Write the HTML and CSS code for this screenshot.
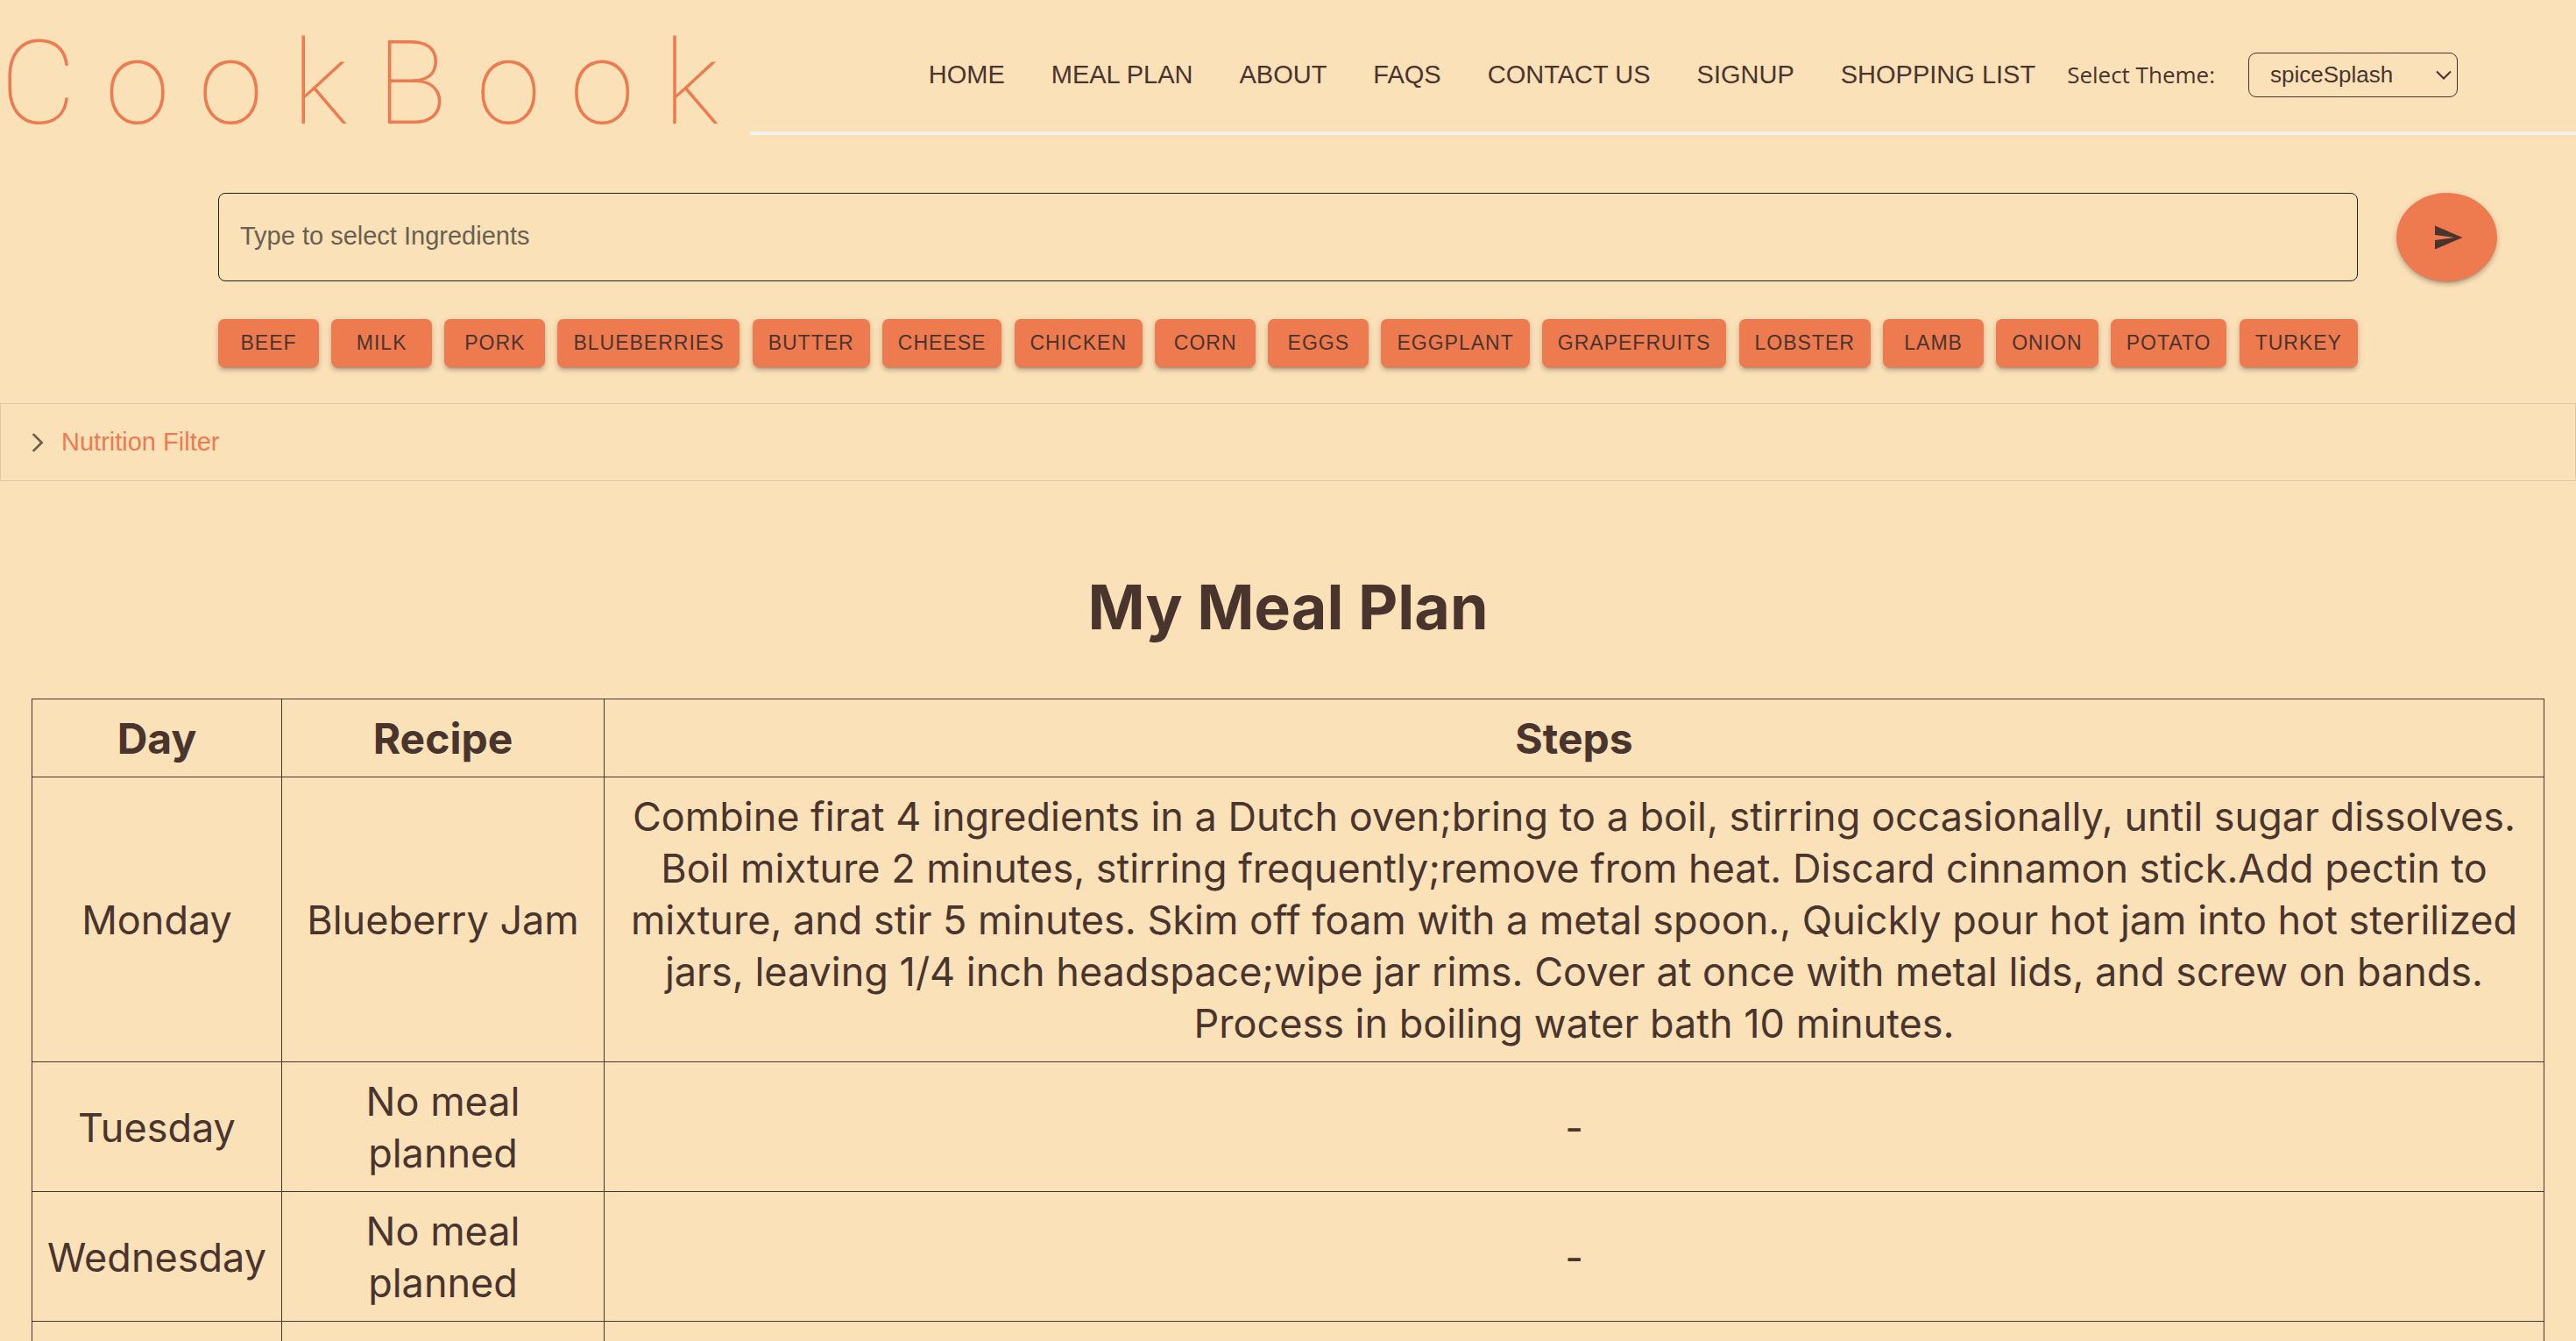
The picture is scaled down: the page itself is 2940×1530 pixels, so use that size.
FILE: index.html
```html
<!DOCTYPE html>
<html lang="en">
<head>
<meta charset="utf-8">
<title>CookBook</title>
<link rel="stylesheet" href="styles.css">
</head>
<body>
<header class="header">
  <div class="logo">CookBook</div>
  <div class="topbar">
    <nav class="nav">
      <a href="#">HOME</a>
      <a href="#">MEAL PLAN</a>
      <a href="#">ABOUT</a>
      <a href="#">FAQS</a>
      <a href="#">CONTACT US</a>
      <a href="#">SIGNUP</a>
      <a href="#">SHOPPING LIST</a>
    </nav>
    <label class="theme-label" for="theme">Select Theme:</label>
    <div class="theme">
      <select id="theme" class="theme-select"><option>spiceSplash</option></select>
      <svg class="theme-arrow" viewBox="0 0 18 12" aria-hidden="true"><path d="M1 1.500 9 9.500 17 1.500" fill="none" stroke="currentColor" stroke-width="2"/></svg>
    </div>
  </div>
</header>
<main>
  <form class="search">
    <input class="search-input" type="text" aria-label="Ingredients" placeholder="Type to select Ingredients">
    <button class="send" type="button" aria-label="Search">
      <svg class="send-icon" viewBox="0 0 24 24" aria-hidden="true"><path fill="currentColor" d="M2.010 21 23 12 2.010 3 2 10l15 2-15 2z"/></svg>
    </button>
    <div class="chips">
      <button class="chip" type="button">BEEF</button>
      <button class="chip" type="button">MILK</button>
      <button class="chip" type="button">PORK</button>
      <button class="chip" type="button">BLUEBERRIES</button>
      <button class="chip" type="button">BUTTER</button>
      <button class="chip" type="button">CHEESE</button>
      <button class="chip" type="button">CHICKEN</button>
      <button class="chip" type="button">CORN</button>
      <button class="chip" type="button">EGGS</button>
      <button class="chip" type="button">EGGPLANT</button>
      <button class="chip" type="button">GRAPEFRUITS</button>
      <button class="chip" type="button">LOBSTER</button>
      <button class="chip" type="button">LAMB</button>
      <button class="chip" type="button">ONION</button>
      <button class="chip" type="button">POTATO</button>
      <button class="chip" type="button">TURKEY</button>
    </div>
  </form>
  <button class="filter" type="button">
    <svg class="filter-icon" viewBox="0 0 24 24" aria-hidden="true"><path fill="currentColor" d="M6.230 20.230 8 22l10-10L8 2 6.230 3.770 14.460 12z"/></svg>
    <span>Nutrition Filter</span>
  </button>
  <section class="plan">
    <h1 class="plan-title">My Meal Plan</h1>
    <table class="plan-table">
      <colgroup><col class="col-day"><col class="col-recipe"><col></colgroup>
      <thead><tr><th>Day</th><th>Recipe</th><th>Steps</th></tr></thead>
      <tbody>
        <tr><td>Monday</td><td>Blueberry Jam</td><td>Combine firat 4 ingredients in a Dutch oven;bring to a boil, stirring occasionally, until sugar dissolves. Boil mixture 2 minutes, stirring frequently;remove from heat. Discard cinnamon stick.Add pectin to mixture, and stir 5 minutes. Skim off foam with a metal spoon., Quickly pour hot jam into hot sterilized jars, leaving 1/4 inch headspace;wipe jar rims. Cover at once with metal lids, and screw on bands. Process in boiling water bath 10 minutes.</td></tr>
        <tr><td>Tuesday</td><td>No meal planned</td><td>-</td></tr>
        <tr><td>Wednesday</td><td>No meal planned</td><td>-</td></tr>
        <tr><td>Thursday</td><td>No meal planned</td><td>-</td></tr>
      </tbody>
    </table>
  </section>
</main>
</body>
</html>
```
FILE: styles.css
```css
:root {
  --bg: #fae1b8;
  --accent: #ee7a50;
  --ink: #4a342e;
}
* { box-sizing: border-box; }
body {
  margin: 0;
  background: var(--bg);
  color: var(--ink);
  font-family: "Liberation Sans", Arial, sans-serif;
  font-size: 29px;
}
.header { display: flex; align-items: flex-start; height: 154px; }
.logo {
  flex: none;
  width: 856px;
  font: 100 134px/154px Roboto, sans-serif;
  letter-spacing: 33px;
  padding-top: 19px;
  color: var(--accent);
  white-space: nowrap;
}
.topbar {
  flex: 1;
  display: flex;
  align-items: center;
  justify-content: flex-end;
  height: 154px;
  padding: 20px 135px 0 0;
  border-bottom: 4px solid #f2f3ee;
}
.nav { display: flex; gap: 53px; }
.nav a { color: inherit; text-decoration: none; white-space: nowrap; }
.theme-label {
  margin: 0 38px 0 36px;
  font-family: "Open Sans", sans-serif;
  font-size: 26px;
}
.theme { position: relative; color: var(--ink); }
.theme-select {
  appearance: none;
  display: block;
  width: 239px;
  height: 51px;
  padding: 0 24px;
  border: 1px solid var(--ink);
  border-radius: 9px;
  background: var(--bg);
  color: inherit;
  font: 26px "Liberation Sans", Arial, sans-serif;
}
.theme-arrow { position: absolute; right: 7px; top: 20px; width: 18px; height: 12px; pointer-events: none; }

.search {
  display: grid;
  grid-template-columns: 1fr 115px;
  gap: 43px 44px;
  padding: 66px 90px 41px 249px;
}
.search-input {
  width: 100%;
  height: 101px;
  padding: 0 24px 2px;
  border: 1px solid #222;
  border-radius: 8px;
  background: transparent;
  color: inherit;
  font: 29px "Liberation Sans", Arial, sans-serif;
}
.search-input::placeholder { color: #6a604f; opacity: 1; }
.send, .chip {
  border: 0;
  background: var(--accent);
  color: var(--ink);
  box-shadow: 0 5px 2px -4px rgba(0, 0, 0, .2), 0 4px 4px rgba(0, 0, 0, .14), 0 2px 9px rgba(0, 0, 0, .12);
}
.send {
  display: flex;
  align-items: center;
  justify-content: center;
  height: 101px;
  padding: 0 0 0 3px;
  border-radius: 50%;
}
.send-icon { width: 36px; height: 36px; }
.chips { display: flex; justify-content: space-between; }
.chip {
  min-width: 115px;
  height: 55px;
  padding: 0 18px;
  border-radius: 7px;
  font: 23px "Liberation Sans", Arial, sans-serif;
  letter-spacing: 1px;
}
.filter {
  display: flex;
  align-items: center;
  gap: 14px;
  width: 100%;
  height: 89px;
  padding: 0 29px;
  border: 1px solid #dfc8a2;
  background: transparent;
  color: var(--accent);
  font: 29px "Liberation Sans", Arial, sans-serif;
}
.filter-icon { width: 26px; height: 26px; color: #6a604f; }

.plan { padding: 0 36px; font-family: Inter, sans-serif; }
.plan-title {
  margin: 99px 0 59px;
  text-align: center;
  font-size: 70px;
  line-height: 90px;
  font-weight: 700;
}
.plan-table {
  width: 100%;
  table-layout: fixed;
  border-collapse: collapse;
  text-align: center;
  font-size: 45px;
  line-height: 59px;
}
.plan-table th, .plan-table td { border: 1px solid var(--ink); padding: 15px 14px 14px; }
.plan-table th { font-size: 48px; }
.col-day { width: 285px; }
.col-recipe { width: 368px; }
```
